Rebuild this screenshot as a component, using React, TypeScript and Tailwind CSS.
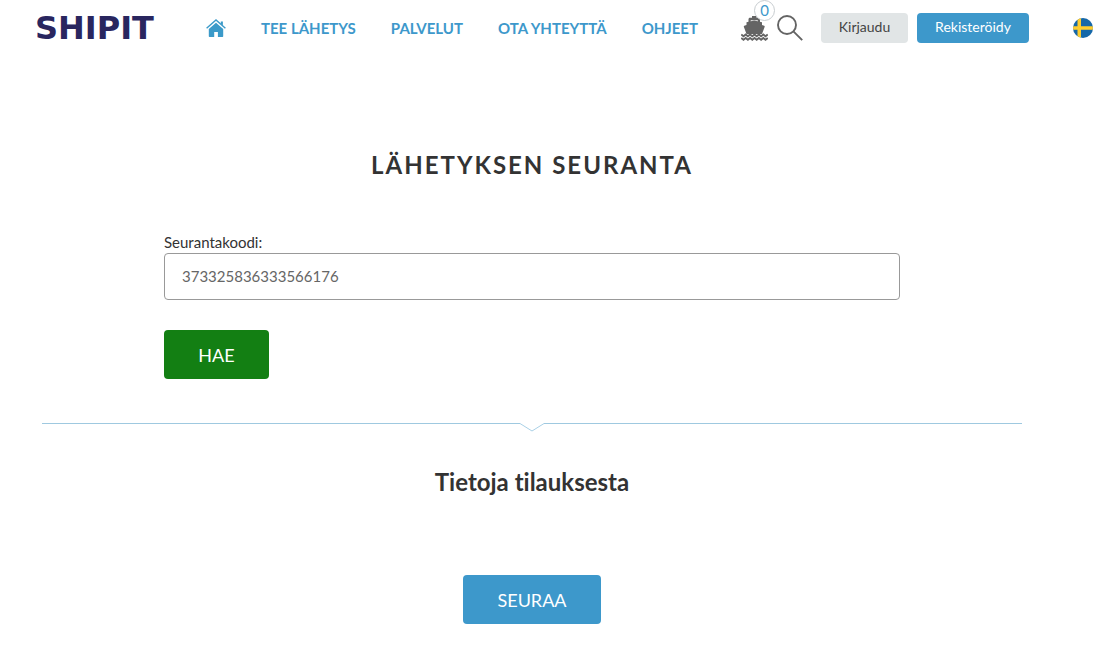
import { useState } from "react"

const navLinks = [
  { label: "TEE LÄHETYS", href: "#laheta" },
  { label: "PALVELUT", href: "#palvelut" },
  { label: "OTA YHTEYTTÄ", href: "#yhteys" },
  { label: "OHJEET", href: "#ohjeet" },
]

function HomeIcon() {
  return (
    <svg viewBox="0 0 20 18" className="w-5 h-[18px]" fill="#3b9ac9" aria-hidden="true">
      <path d="M10 3.7 17.2 10v7.3a.7.7 0 0 1-.7.7h-4.6v-5H8.2v5H3.5a.7.7 0 0 1-.7-.7V10z" />
      <path d="M.6 9.2 10 1l9.4 8.2" fill="none" stroke="#3b9ac9" strokeWidth="1.4" />
      <path d="M14.8 2.4h2.1v4.1l-2.1-1.8z" />
    </svg>
  )
}

function ShipIcon() {
  return (
    <svg viewBox="0 0 27 25" className="w-[27px] h-[25px]" fill="#646464" aria-hidden="true">
      <path d="M11 0h4.5v2H11z" />
      <path d="M7.5 7V3.2c0-.9.6-1.5 1.5-1.5h8.5c.9 0 1.5.6 1.5 1.5V7h-2.2V4.2H9.7V7z" />
      <path d="M5.5 6.3 13.2 4.5 21 6.3V9l2.2.8c.5.2.6.6.4 1.1L21 18H5.5L2.9 10.9c-.2-.5-.1-.9.4-1.1L5.5 9z" />
      <path
        d="M.3 18.5 2.5 20.3 4.7 18.5 6.9 20.3 9.1 18.5 11.3 20.3 13.5 18.5 15.7 20.3 17.9 18.5 20.1 20.3 22.3 18.5 24.5 20.3 26.7 18.5M.3 22 2.5 23.8 4.7 22 6.9 23.8 9.1 22 11.3 23.8 13.5 22 15.7 23.8 17.9 22 20.1 23.8 22.3 22 24.5 23.8 26.7 22"
        fill="none"
        stroke="#646464"
        strokeWidth="1.8"
      />
    </svg>
  )
}

function SearchIcon() {
  return (
    <svg viewBox="0 0 26 26" className="w-[26px] h-[26px]" fill="none" stroke="#646464" strokeWidth="1.9" aria-hidden="true">
      <circle cx="10" cy="10" r="9" />
      <path d="M16.4 16.4 25.2 25.2" />
    </svg>
  )
}

function SwedishFlag() {
  return (
    <svg viewBox="0 0 20 20" className="w-5 h-5" aria-hidden="true">
      <clipPath id="flag">
        <circle cx="10" cy="10" r="10" />
      </clipPath>
      <g clipPath="url(#flag)">
        <path d="M0 0h20v20H0z" fill="#1668a8" />
        <path d="M4.5 0H8v20H4.5zM0 8.3h20v3.5H0z" fill="#ffcd2e" />
      </g>
    </svg>
  )
}

function Header() {
  return (
    <header className="flex items-center h-14 pl-[35px] pr-[27px]">
      <a href="#etusivu" className="w-[134px] font-['DejaVu_Sans',sans-serif] text-[32px] leading-8 font-bold text-[#29265f]">
        SHIPIT
      </a>

      <nav className="flex items-center gap-[35px] ml-[37px] text-[15px] font-bold whitespace-nowrap text-[#3d98cb]">
        <a href="#etusivu" aria-label="Etusivu">
          <HomeIcon />
        </a>
        {navLinks.map((link) => (
          <a key={link.href} href={link.href}>
            {link.label}
          </a>
        ))}
      </nav>

      <div className="flex items-center ml-auto">
        <a href="#kori" aria-label="Ostoskori" className="relative">
          <ShipIcon />
          <span className="absolute -top-4 left-[13px] flex items-center justify-center w-[21px] h-[21px] rounded-full border border-[#c8cdd0] bg-white text-[15px] text-[#3d98cb]">
            0
          </span>
        </a>
        <button type="button" aria-label="Haku" className="ml-[9px]">
          <SearchIcon />
        </button>
        <button type="button" className="ml-[18px] w-[87px] h-[30px] pb-0.5 rounded bg-[#e1e5e6] text-sm text-[#444]">
          Kirjaudu
        </button>
        <button type="button" className="ml-[9px] w-28 h-[30px] pb-0.5 rounded bg-[#3d98cb] text-sm text-white">
          Rekisteröidy
        </button>
        <a href="#sv" aria-label="Svenska" className="ml-11">
          <SwedishFlag />
        </a>
      </div>
    </header>
  )
}

function Divider() {
  return (
    <div className="flex items-start mt-11">
      <div className="flex-1 border-t border-[#9fc9e0]" />
      <svg viewBox="0 0 24 9" className="w-6 h-[9px]" fill="none" stroke="#a9d0e6" aria-hidden="true">
        <path d="M0 .5 12 8 24 .5" />
      </svg>
      <div className="flex-1 border-t border-[#9fc9e0]" />
    </div>
  )
}

export default function App() {
  const [code, setCode] = useState("373325836333566176")

  return (
    <div className="min-h-screen bg-white font-[Lato,sans-serif] [font-variant-ligatures:none] text-[#333]">
      <Header />

      <main className="pl-[42px] pr-[98px]">
        <h1 className="pt-[91px] text-2xl leading-9 font-bold tracking-[2px] text-center">LÄHETYKSEN SEURANTA</h1>

        <form className="max-w-[736px] mx-auto mt-[50px]" onSubmit={(e) => e.preventDefault()}>
          <label htmlFor="code" className="block pb-0.5 text-[15px] leading-[18px]">
            Seurantakoodi:
          </label>
          <input
            id="code"
            type="text"
            value={code}
            onChange={(e) => setCode(e.target.value)}
            className="block w-full h-[47px] px-[17px] pb-0.5 rounded border border-[#999] text-[15px] text-[#666]"
          />
          <button type="submit" className="mt-[30px] w-[105px] h-[49px] rounded bg-[#137f13] text-lg text-white">
            HAE
          </button>
        </form>

        <Divider />

        <section className="text-center">
          <h2 className="mt-8 text-2xl leading-9 font-bold">Tietoja tilauksesta</h2>
          <button type="button" className="mt-[75px] w-[138px] h-[49px] rounded bg-[#3d98cb] text-lg text-white">
            SEURAA
          </button>
        </section>
      </main>
    </div>
  )
}
